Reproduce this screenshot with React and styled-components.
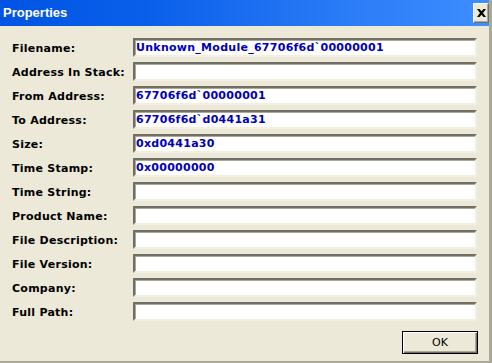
import React from "react";
import styled, { createGlobalStyle } from "styled-components";

const Global = createGlobalStyle`
  html, body { margin: 0; padding: 0; background: #ECE9D8; }
  body { font-family: "DejaVu Sans", sans-serif; }
`;

const Window = styled.div`
  box-sizing: border-box;
  width: 492px;
  height: 363px;
  background: #ECE9D8;
  border-right: 3px solid #ACA899;
  border-bottom: 2px solid #ACA899;
  display: flex;
  flex-direction: column;
  overflow: hidden;
`;

const TitleBar = styled.div`
  height: 26px;
  flex: none;
  display: flex;
  align-items: center;
  justify-content: space-between;
  padding: 0 0 0 3px;
  background: linear-gradient(to right, #0054E3 0%, #0A5FEA 30%, #2A7BF6 70%, #3D8EFF 100%);
  margin-right: -1px;
`;

const Title = styled.span`
  font-family: "Liberation Sans", Arial, sans-serif;
  font-weight: bold;
  font-size: 13px;
  color: #fff;
  padding-bottom: 2px;
`;

const CloseButton = styled.div`
  box-sizing: border-box;
  width: 16px;
  height: 20px;
  margin-right: 1px;
  background: #ECE9D8;
  border-top: 1px solid #fff;
  border-left: 1px solid #fff;
  border-right: 1px solid #716F64;
  border-bottom: 1px solid #716F64;
  box-shadow: inset -1px -1px 0 #ACA899;
  display: flex;
  align-items: center;
  justify-content: center;
`;

const Body = styled.div`
  flex: 1;
  display: flex;
  flex-direction: column;
  padding: 12px 12px 0 12px;
`;

const Form = styled.div`
  display: grid;
  grid-template-columns: 121px 344px;
  grid-auto-rows: 19px;
  row-gap: 5px;
`;

const Label = styled.div`
  font-family: "DejaVu Sans", Verdana, sans-serif;
  font-weight: bold;
  font-size: 11px;
  letter-spacing: 0.25px;
  color: #000;
  display: flex;
  align-items: center;
  padding-top: 1px;
`;

const Field = styled.div`
  box-sizing: border-box;
  height: 19px;
  background: #fff;
  border-top: 2px solid #716F64;
  border-left: 2px solid #716F64;
  border-right: 2px solid #F1EFE2;
  border-bottom: 2px solid #F1EFE2;
  box-shadow: inset 1px 1px 0 #ACA899;
  font-family: "DejaVu Sans", Verdana, sans-serif;
  font-weight: bold;
  font-size: 11px;
  letter-spacing: 0.27px;
  color: #0000B8;
  display: flex;
  align-items: center;
  padding-left: 1px;
  white-space: nowrap;
  overflow: hidden;
`;

const Footer = styled.div`
  display: flex;
  justify-content: flex-end;
  margin-top: 10px;
`;

const OkButton = styled.button`
  box-sizing: border-box;
  width: 76px;
  height: 23px;
  margin-right: -1px;
  background: #ECE9D8;
  border: 1px solid #000;
  box-shadow: inset 1px 1px 0 #fff, inset -1px -1px 0 #716F64, inset -2px -2px 0 #ACA899;
  font-family: "DejaVu Sans", Tahoma, sans-serif;
  font-size: 11px;
  color: #000;
  padding: 0;
`;

const rows = [
  ["Filename:", "Unknown_Module_67706f6d`00000001"],
  ["Address In Stack:", ""],
  ["From Address:", "67706f6d`00000001"],
  ["To Address:", "67706f6d`d0441a31"],
  ["Size:", "0xd0441a30"],
  ["Time Stamp:", "0x00000000"],
  ["Time String:", ""],
  ["Product Name:", ""],
  ["File Description:", ""],
  ["File Version:", ""],
  ["Company:", ""],
  ["Full Path:", ""],
];

export default function App() {
  return (
    <>
      <Global />
      <Window>
        <TitleBar>
          <Title>Properties</Title>
          <CloseButton>
            <svg width="9" height="8" viewBox="0 0 9 8">
              <path d="M0 0h2.5l2 2.3 2-2.3H9L6 4l3 4H6.5l-2-2.3-2 2.3H0l3-4z" fill="#000" />
            </svg>
          </CloseButton>
        </TitleBar>
        <Body>
          <Form>
            {rows.map(([label, value]) => (
              <React.Fragment key={label}>
                <Label>{label}</Label>
                <Field>{value}</Field>
              </React.Fragment>
            ))}
          </Form>
          <Footer>
            <OkButton>OK</OkButton>
          </Footer>
        </Body>
      </Window>
    </>
  );
}
